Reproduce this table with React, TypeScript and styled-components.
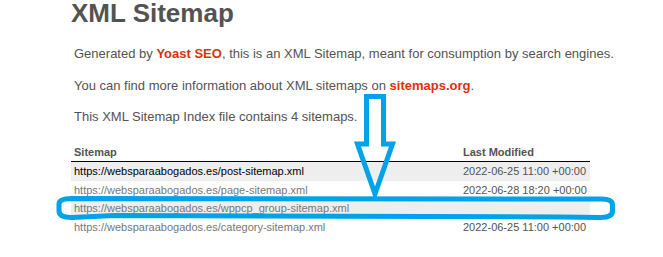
import React from 'react';
import styled, { createGlobalStyle } from 'styled-components';

const GlobalStyle = createGlobalStyle`
  body {
    margin: 0;
    background: #fff;
    font-family: 'Liberation Sans', Arial, Helvetica, sans-serif;
    font-size: 13px;
    color: #545353;
  }
`;

const Page = styled.div`
  position: relative;
  width: 663px;
  height: 257px;
  overflow: hidden;
`;

const Content = styled.div`
  padding-left: 71px;
`;

const Title = styled.h1`
  margin: 0 0 20px;
  font-size: 26px;
  line-height: 26px;
  font-weight: bold;
  color: #545353;
`;

const Expl = styled.p`
  margin: 16px 3px;
  line-height: 15.6px;
`;

const RedLink = styled.a`
  color: #da3114;
  font-weight: 600;
  text-decoration: none;
`;

const SitemapTable = styled.table`
  width: 519px;
  margin-top: 18px;
  border: none;
  border-collapse: collapse;
  table-layout: fixed;
`;

const Th = styled.th<{ $w?: number }>`
  box-sizing: border-box;
  width: ${(p) => (p.$w ? `${p.$w}px` : 'auto')};
  text-align: left;
  font-size: 11px;
  line-height: 12.5px;
  padding: 3px;
  border-bottom: 1px solid #000;
`;

const Row = styled.tr`
  &:nth-child(odd) td {
    background-color: #eee;
  }
`;

const Td = styled.td`
  font-size: 11px;
  line-height: 12.5px;
  padding: 3px;
  white-space: nowrap;
`;

const UrlLink = styled.a<{ $visited?: boolean }>`
  color: ${(p) => (p.$visited ? '#777' : '#000')};
  text-decoration: none;
`;

const Annotation = styled.svg`
  position: absolute;
  left: 0;
  top: 0;
  pointer-events: none;
`;

const sitemaps = [
  { url: 'https://websparaabogados.es/post-sitemap.xml', date: '2022-06-25 11:00 +00:00', visited: false },
  { url: 'https://websparaabogados.es/page-sitemap.xml', date: '2022-06-28 18:20 +00:00', visited: true },
  { url: 'https://websparaabogados.es/wppcp_group-sitemap.xml', date: '', visited: true },
  { url: 'https://websparaabogados.es/category-sitemap.xml', date: '2022-06-25 11:00 +00:00', visited: true }
];

const App: React.FC = () => {
  return (
    <Page>
      <GlobalStyle />
      <Content>
        <Title>XML Sitemap</Title>
        <Expl>
          Generated by <RedLink href="#">Yoast SEO</RedLink>, this is an XML Sitemap, meant for
          consumption by search engines.
        </Expl>
        <Expl>
          You can find more information about XML sitemaps on <RedLink href="#">sitemaps.org</RedLink>.
        </Expl>
        <Expl>This XML Sitemap Index file contains 4 sitemaps.</Expl>
        <SitemapTable>
          <thead>
            <tr>
              <Th>Sitemap</Th>
              <Th $w={130}>Last Modified</Th>
            </tr>
          </thead>
          <tbody>
            {sitemaps.map((s) => (
              <Row key={s.url}>
                <Td>
                  <UrlLink href="#" $visited={s.visited}>
                    {s.url}
                  </UrlLink>
                </Td>
                <Td>{s.date}</Td>
              </Row>
            ))}
          </tbody>
        </SitemapTable>
      </Content>

      <Annotation width="663" height="257" viewBox="0 0 663 257">
        <g fill="none" stroke="#00a2e8" strokeWidth="5" strokeLinejoin="miter">
          <path d="M366.5 96.5 L383.5 96.5 L383.5 144 L392.5 144 L375 194 L357.5 144 L366.5 144 Z" />
          <path d="M72 198.5 L600 199 Q612.5 198.5 612.5 205 L612.5 211 Q612.5 217.5 600 217.5 L560 217 L115 215.5 L72 217.5 Q59 217.5 59 211 L59 204 Q59 198.5 72 198.5 Z" />
        </g>
      </Annotation>
    </Page>
  );
};

export default App;
